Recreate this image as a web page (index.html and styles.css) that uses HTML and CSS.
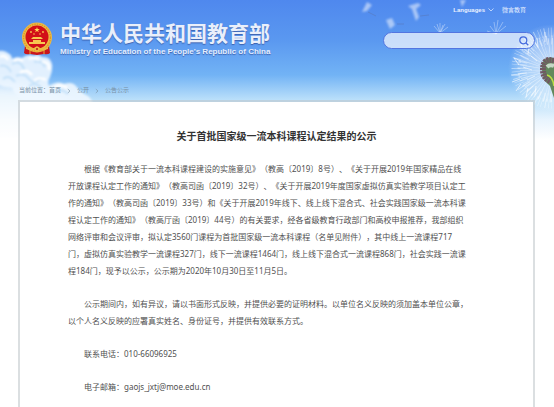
FILE: index.html
```html
<!DOCTYPE html>
<html lang="zh-CN">
<head>
<meta charset="utf-8">
<meta name="viewport" content="width=device-width, initial-scale=1">
<title>关于首批国家级一流本科课程认定结果的公示</title>
<link rel="stylesheet" href="styles.css">
</head>
<body>
<div class="page">
  <svg class="clouds" viewBox="0 0 110 140" aria-hidden="true">
    <defs>
      <filter id="soft" x="-20%" y="-20%" width="140%" height="140%"><feGaussianBlur stdDeviation=".8"/></filter>
      <filter id="haze" x="-40%" y="-40%" width="180%" height="180%"><feGaussianBlur stdDeviation="6"/></filter>
    </defs>
    <path d="M-20 84Q10 80 40 90T84 112V150H-20Z" fill="#fff" opacity=".75" filter="url(#haze)"/>
    <g filter="url(#soft)">
      <path d="M-4 52Q2 49 8 53Q12 55 12 59Q16 56 22 58Q28 53 34 56Q38 53 42 57Q50 56 52 64Q53 70 50 77Q47 82 49 86Q58 80 64 84Q72 81 76 86Q80 92 86 95Q91 97 93 104H30Q14 96 12 88Q4 88-4 84Z" fill="#eef7ff" opacity=".9"/>
      <path d="M12 64Q20 60 23 67T31 72M34 62Q42 60 45 67M16 76Q24 72 29 79T42 77M0 66Q7 64 11 72M3 79Q9 74 15 82M29 86Q35 82 41 87M56 92Q62 88 68 94" fill="none" stroke="#b9dbf8" stroke-width="2" opacity=".8"/>
      <path d="M0 57Q5 54 8 60M14 61Q18 57 23 61M29 59Q35 56 39 60M42 62Q50 61 49 70M20 73Q26 68 32 75M34 81Q40 76 46 80M55 87Q61 83 67 88" fill="none" stroke="#fff" stroke-width="2.500"/>
    </g>
  </svg>
  <svg class="dandelion" viewBox="0 0 200 130" aria-hidden="true">
    <defs>
      <radialGradient id="fluff"><stop offset="0" stop-color="#fff" stop-opacity=".7"/><stop offset=".6" stop-color="#fff" stop-opacity=".4"/><stop offset="1" stop-color="#fff" stop-opacity="0"/></radialGradient>
      <filter id="blur" x="-30%" y="-30%" width="160%" height="160%"><feGaussianBlur stdDeviation="1"/></filter>
      <filter id="fine" x="-20%" y="-20%" width="140%" height="140%"><feGaussianBlur stdDeviation=".5"/></filter>
    </defs>
    <g fill="#fff" opacity=".5" filter="url(#blur)">
      <path d="M8 12L13 2L18 5L13 11ZM54 6L64 3L67 5L62 9L65 17L62 21L58 9ZM32 20L38 18L41 25L36 29ZM106 0L112 0L108 7Z"/>
    </g>
    <path d="M14 12l8 4M66 16l9-1M43 24l7 0" fill="none" stroke="#5876b5" stroke-width="1" opacity=".5"/>
    <g fill="none" stroke="#fff" stroke-width=".5" opacity=".7">
      <path d="M86 33L80 26M86 33L83 24M86 33L86 23M86 33L89 25M86 33L91 24M86 33L94 27M142 34L133 31M142 34L136 26M142 34L140 22M142 34L144 20M142 34L149 22M142 34L152 26"/>
    </g>
    <g fill="none" stroke="#fff" filter="url(#fine)">
      <circle cx="198" cy="68" r="44" fill="url(#fluff)" stroke="none"/>
      <circle cx="198" cy="70" r="19" stroke-width="26" stroke-dasharray=".5 1.600 .3 2.900 .6 2.200" opacity=".5"/>
      <circle cx="197" cy="69" r="29" stroke-width="9" stroke-dasharray="1 3 .5 1.700 1.200 4" opacity=".5"/>
      <circle cx="198" cy="68" r="36" stroke-width="9" stroke-dasharray=".6 2.500 .9 3.300 .5 2.100" opacity=".45"/>
      <path d="M160 58l7 3M160 58l5 7M166 42l3 8M175 46l-1 8M157 75l9 0M158 82l8-3M162 91l5-7M172 97l2-9M181 95l1-9M177 56l6 5M169 67l9 3M173 80l8-4M183 38l1 9M191 32l0 10" stroke-width=".8" opacity=".8"/>
    </g>
    <path d="M188 64Q191 56 200 58V98L196 86Q187 80 188 64Z" fill="#62885c"/>
    <path d="M200 61Q189 57 189 70Q189 78 196 81" fill="none" stroke="#705762" stroke-width="6" stroke-dasharray="2 .7"/>
    <path d="M193 67q3-3 7-1" stroke="#c5d8c5" stroke-width="4" fill="none"/>
    <path d="M193 75Q199 77 200 86" stroke="#b9df44" stroke-width="1.500" fill="none"/>
  </svg>

  <header class="header">
    <a class="brand" href="#">
      <svg class="emblem" viewBox="0 0 32 34" aria-hidden="true">
        <path d="M4 24L3 31Q5 33 9 32L16 33L23 32Q27 33 29 31L28 24Z" fill="#c9151d"/>
        <circle cx="16" cy="15.500" r="15" fill="#edb943"/>
        <circle cx="16" cy="15.500" r="13.400" fill="none" stroke="#d9982a" stroke-width="1.200" stroke-dasharray="1.500 1"/>
        <circle cx="16" cy="15" r="11.500" fill="#d20f18"/>
        <path d="M16 5l.7 2h2.100l-1.700 1.200.7 2-1.800-1.200-1.800 1.200.7-2-1.700-1.200h2.100Z" fill="#ffdb54"/>
        <g fill="#f7c850"><circle cx="10" cy="10" r=".9"/><circle cx="13" cy="12" r=".8"/><circle cx="19" cy="12" r=".8"/><circle cx="22" cy="10" r=".9"/>
        <path d="M10 17L12 15H20L22 17ZM12 18H20V20H24V22H8V20H12Z"/></g>
        <path d="M5 25Q10 27 13 26Q16 23 19 26Q22 27 27 25L27 27Q21 29 16 28Q11 29 5 27Z" fill="#edb943"/>
        <circle cx="16" cy="27" r="2.500" fill="#edb943"/><circle cx="16" cy="27" r="1" fill="#bd1919"/>
        <path d="M9 28V32M23 28V32" stroke="#e9ad3c" stroke-width="1"/>
      </svg>
      <span class="names">
        <span class="name-zh">中华人民共和国教育部</span>
        <span class="name-en">Ministry of Education of the People's Republic of China</span>
      </span>
    </a>
    <div class="tools">
      <nav class="links">
        <a class="lang" href="#">Languages
          <svg class="chevron" viewBox="0 0 6 4" aria-hidden="true"><path d="M.5.5L3 3L5.500.5" fill="none" stroke="#d5e5ff" stroke-width=".8"/></svg></a>
        <a href="#">微言教育</a>
      </nav>
      <form class="search">
        <input type="search" aria-label="搜索">
        <button type="button" aria-label="搜索"><svg viewBox="0 0 10 10" aria-hidden="true"><circle cx="4.300" cy="4.300" r="3.500" fill="none" stroke="#4469dc" stroke-width="1.200"/><path d="M6.900 6.900L9.300 9.300" stroke="#4469dc" stroke-width="1.300"/></svg></button>
      </form>
    </div>
  </header>

  <nav class="crumbs" aria-label="当前位置">
    <span>当前位置：<a href="#">首页</a></span><svg class="sep" viewBox="0 0 4 6" aria-hidden="true"><path d="M.8 1L3 3L.8 5"/></svg><a href="#">公开</a><svg class="sep" viewBox="0 0 4 6" aria-hidden="true"><path d="M.8 1L3 3L.8 5"/></svg><a href="#">公告公示</a>
  </nav>

  <main class="card">
    <h1>关于首批国家级一流本科课程认定结果的公示</h1>
    <p>根据《教育部关于一流本科课程建设的实施意见》（教高〔2019〕8号）、《关于开展2019年国家精品在线<br>开放课程认定工作的通知》（教高司函〔2019〕32号）、《关于开展2019年度国家虚拟仿真实验教学项目认定工<br>作的通知》（教高司函〔2019〕33号）和《关于开展2019年线下、线上线下混合式、社会实践国家级一流本科课<br>程认定工作的通知》（教高厅函〔2019〕44号）的有关要求，经各省级教育行政部门和高校申报推荐，我部组织<br>网络评审和会议评审，拟认定3560门课程为首批国家级一流本科课程（名单见附件），其中线上一流课程717<br>门，虚拟仿真实验教学一流课程327门，线下一流课程1464门，线上线下混合式一流课程868门，社会实践一流课<br>程184门，现予以公示，公示期为2020年10月30日至11月5日。</p>
    <p>公示期间内，如有异议，请以书面形式反映，并提供必要的证明材料。以单位名义反映的须加盖本单位公章，<br>以个人名义反映的应署真实姓名、身份证号，并提供有效联系方式。</p>
    <p>联系电话：010-66096925</p>
    <p>电子邮箱：gaojs_jxtj@moe.edu.cn</p>
  </main>
</div>
</body>
</html>
```
FILE: styles.css
```css
* {
  box-sizing: border-box;
}

body {
  margin: 0;
  background: #fff;
  font-family: "Noto Sans", "Noto Sans CJK SC", sans-serif;
  text-spacing-trim: space-all;
  color: #505050;
}

a {
  color: inherit;
  text-decoration: none;
}

.page {
  position: relative;
  display: flex;
  flex-direction: column;
  min-height: 100vh;
  overflow: hidden;
  padding: 0 19px 0 18px;
  background: linear-gradient(#4f88ee 0, #5a98f0 40px, #72b3f5 75px, #bbe0fa 100px, #e8f4fe 120px, #fff 140px) no-repeat;
}

.clouds,
.dandelion {
  position: absolute;
  top: 0;
}

.clouds {
  left: 0;
  width: 110px;
  height: 140px;
}

.dandelion {
  right: 0;
  width: 200px;
  height: 130px;
}

.header {
  position: relative;
  display: flex;
  justify-content: space-between;
  height: 86px;
}

.brand {
  display: flex;
  align-items: flex-start;
  gap: 7px;
  padding: 22px 0 0 3px;
}

.emblem {
  width: 32px;
  height: 34px;
}

.names {
  display: flex;
  flex-direction: column;
  white-space: nowrap;
}

.name-zh {
  font-size: 21px;
  line-height: 23px;
  font-weight: 700;
  color: #e9effb;
  text-shadow: 0 1px 1px #3d62ae;
}

.name-en {
  font-family: "Liberation Sans", sans-serif;
  font-size: 8px;
  line-height: 13px;
  font-weight: 700;
  color: #e4eeff;
  text-shadow: 0 1px 1px #3d62ae;
}

.tools {
  display: flex;
  flex-direction: column;
  width: 152px;
  padding-top: 4px;
}

.links {
  display: flex;
  justify-content: flex-end;
  gap: 8px;
  padding-right: 9px;
  font-size: 6px;
  line-height: 12px;
  color: #eaf2ff;
}

.lang {
  display: flex;
  align-items: center;
  gap: 3px;
  font-family: "Liberation Sans", sans-serif;
  font-weight: 700;
}

.chevron {
  width: 6px;
  height: 4px;
}

.search {
  display: flex;
  align-items: center;
  height: 17px;
  margin-top: 16px;
  padding-right: 5px;
  border: 1px solid #5275e0;
  border-radius: 9px;
  background: rgba(255, 255, 255, 0.68);
}

.search input {
  flex: 1;
  min-width: 0;
  height: 15px;
  padding: 0 8px;
  border: 0;
  outline: 0;
  background: transparent;
  font-size: 8px;
}

.search button {
  display: flex;
  padding: 0;
  border: 0;
  background: transparent;
}

.search svg {
  width: 10px;
  height: 10px;
}

.crumbs {
  position: relative;
  display: flex;
  height: 14px;
  padding-left: 1px;
  font-size: 6px;
  line-height: 9px;
  color: #7890a5;
}

.sep {
  width: 4px;
  height: 6px;
  margin: 2px 6px;
  fill: none;
  stroke: #7890a5;
  stroke-width: 0.6;
}

.card {
  position: relative;
  flex: 1;
  padding: 26px 48px 16px;
  border: 2px solid rgba(190, 196, 200, 0.55);
  border-bottom: 0;
  background: #fff;
  background-clip: padding-box;
}

h1 {
  margin: 0 0 16px;
  font-size: 10px;
  line-height: 16px;
  font-weight: 700;
  text-align: center;
  color: #333;
}

p {
  margin: 0 0 16px;
  font-size: 8px;
  line-height: 17px;
  text-indent: 2em;
  white-space: nowrap;
}
```
